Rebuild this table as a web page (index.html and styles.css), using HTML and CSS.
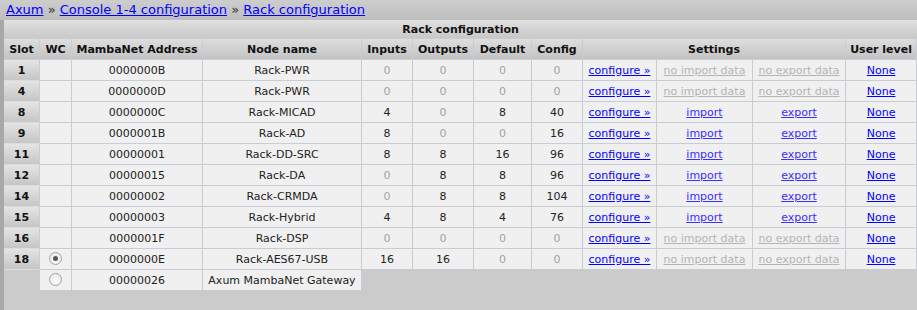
FILE: index.html
```html
<!DOCTYPE html>
<html>
<head>
<meta charset="utf-8">
<title>Rack configuration</title>
<link rel="stylesheet" href="styles.css">
</head>
<body>
<div class="crumbs"><a href="#">Axum</a> » <a href="#">Console 1-4 configuration</a> » <a href="#">Rack configuration</a></div>
<div class="panel">
<table class="rack">
<colgroup>
<col class="c-slot"><col class="c-wc"><col class="c-addr"><col class="c-node"><col class="c-in"><col class="c-out"><col class="c-def"><col class="c-cfg"><col class="c-conf"><col class="c-imp"><col class="c-exp"><col class="c-user">
</colgroup>
<thead>
<tr><th class="title" colspan="12">Rack configuration</th></tr>
<tr><th>Slot</th><th>WC</th><th>MambaNet Address</th><th>Node name</th><th>Inputs</th><th>Outputs</th><th>Default</th><th>Config</th><th colspan="3">Settings</th><th>User level</th></tr>
</thead>
<tbody>
<tr><th class="slot">1</th><td></td><td>0000000B</td><td>Rack-PWR</td><td class="z">0</td><td class="z">0</td><td class="z">0</td><td class="z">0</td><td><a href="#">configure »</a></td><td><a class="off" href="#">no import data</a></td><td><a class="off" href="#">no export data</a></td><td><a href="#">None</a></td></tr>
<tr><th class="slot">4</th><td></td><td>0000000D</td><td>Rack-PWR</td><td class="z">0</td><td class="z">0</td><td class="z">0</td><td class="z">0</td><td><a href="#">configure »</a></td><td><a class="off" href="#">no import data</a></td><td><a class="off" href="#">no export data</a></td><td><a href="#">None</a></td></tr>
<tr><th class="slot">8</th><td></td><td>0000000C</td><td>Rack-MICAD</td><td>4</td><td class="z">0</td><td>8</td><td>40</td><td><a href="#">configure »</a></td><td><a class="v" href="#">import</a></td><td><a class="v" href="#">export</a></td><td><a href="#">None</a></td></tr>
<tr><th class="slot">9</th><td></td><td>0000001B</td><td>Rack-AD</td><td>8</td><td class="z">0</td><td class="z">0</td><td>16</td><td><a href="#">configure »</a></td><td><a class="v" href="#">import</a></td><td><a class="v" href="#">export</a></td><td><a href="#">None</a></td></tr>
<tr><th class="slot">11</th><td></td><td>00000001</td><td>Rack-DD-SRC</td><td>8</td><td>8</td><td>16</td><td>96</td><td><a href="#">configure »</a></td><td><a class="v" href="#">import</a></td><td><a class="v" href="#">export</a></td><td><a href="#">None</a></td></tr>
<tr><th class="slot">12</th><td></td><td>00000015</td><td>Rack-DA</td><td class="z">0</td><td>8</td><td>8</td><td>96</td><td><a href="#">configure »</a></td><td><a class="v" href="#">import</a></td><td><a class="v" href="#">export</a></td><td><a href="#">None</a></td></tr>
<tr><th class="slot">14</th><td></td><td>00000002</td><td>Rack-CRMDA</td><td class="z">0</td><td>8</td><td>8</td><td>104</td><td><a href="#">configure »</a></td><td><a class="v" href="#">import</a></td><td><a class="v" href="#">export</a></td><td><a href="#">None</a></td></tr>
<tr><th class="slot">15</th><td></td><td>00000003</td><td>Rack-Hybrid</td><td>4</td><td>8</td><td>4</td><td>76</td><td><a href="#">configure »</a></td><td><a class="v" href="#">import</a></td><td><a class="v" href="#">export</a></td><td><a href="#">None</a></td></tr>
<tr><th class="slot">16</th><td></td><td>0000001F</td><td>Rack-DSP</td><td class="z">0</td><td class="z">0</td><td class="z">0</td><td class="z">0</td><td><a href="#">configure »</a></td><td><a class="off" href="#">no import data</a></td><td><a class="off" href="#">no export data</a></td><td><a href="#">None</a></td></tr>
<tr><th class="slot">18</th><td><span class="radio on"></span></td><td>0000000E</td><td>Rack-AES67-USB</td><td>16</td><td>16</td><td class="z">0</td><td class="z">0</td><td><a href="#">configure »</a></td><td><a class="off" href="#">no import data</a></td><td><a class="off" href="#">no export data</a></td><td><a href="#">None</a></td></tr>
<tr><td class="blank"></td><td><span class="radio"></span></td><td>00000026</td><td>Axum MambaNet Gateway</td><td class="blank" colspan="8"></td></tr>
</tbody>
</table>
</div>
</body>
</html>
```

FILE: styles.css
```css
html, body {
  margin: 0;
  padding: 0;
}
body {
  background: #cbcbcb;
  font-family: "DejaVu Sans", Verdana, sans-serif;
  font-size: 11px;
  color: #222;
  height: 310px;
  overflow: hidden;
}
.crumbs {
  height: 20px;
  line-height: 19px;
  padding-left: 6px;
  font-size: 13px;
  color: #333;
  background: linear-gradient(#cdcdcd, #bebebe);
}
.crumbs a {
  color: #0000ff;
}
.panel {
  border-left: 4px solid #a8a8a8;
  height: 290px;
}
.rack {
  border-collapse: separate;
  border-spacing: 0;
  table-layout: fixed;
  width: 913px;
}
.c-slot { width: 36px; }
.c-wc { width: 32px; }
.c-addr { width: 131px; }
.c-node { width: 159px; }
.c-in { width: 51px; }
.c-out { width: 61px; }
.c-def { width: 58px; }
.c-cfg { width: 51px; }
.c-conf { width: 74px; }
.c-imp { width: 96px; }
.c-exp { width: 93px; }
.c-user { width: 71px; }

.rack th, .rack td {
  padding: 0;
  text-align: center;
  white-space: nowrap;
  overflow: hidden;
}
.rack thead th {
  height: 20px;
  font-weight: bold;
  color: #111;
  background: linear-gradient(#dedede, #c3c3c3);
  border-right: 1px solid #c9ccd2;
  border-bottom: 1px solid #c9ccd2;
}
.rack thead th.title {
  height: 18px;
  border-right: 0;
  background: linear-gradient(#e0e0e0, #c8c8c8);
}
.rack td {
  height: 20px;
  background: #f0f0f0;
  color: #222;
  border-right: 1px solid #c9ccd6;
  border-bottom: 1px solid #c9ccd6;
}
.rack th.slot {
  height: 20px;
  font-weight: bold;
  color: #111;
  background: linear-gradient(#e4e4e4, #c6c6c6);
  border-right: 1px solid #c9ccd2;
  border-bottom: 1px solid #dcdcdc;
}
.rack td.z {
  color: #a3a3a3;
}
.rack td.blank {
  background: transparent;
  border: 0;
}
.rack a {
  color: #0000ff;
}
.rack a.v {
  color: #3a2fff;
}
.rack a.off {
  color: #b4b4b4;
}
.radio {
  display: inline-block;
  vertical-align: middle;
  width: 11px;
  height: 11px;
  border: 1px solid #a4a4a4;
  border-radius: 50%;
  background: radial-gradient(circle at 50% 60%, #fdfdfd, #e2e2e2);
  position: relative;
  top: -1px;
}
.radio.on::after {
  content: "";
  position: absolute;
  left: 3px;
  top: 3px;
  width: 5px;
  height: 5px;
  border-radius: 50%;
  background: #555;
}
```
